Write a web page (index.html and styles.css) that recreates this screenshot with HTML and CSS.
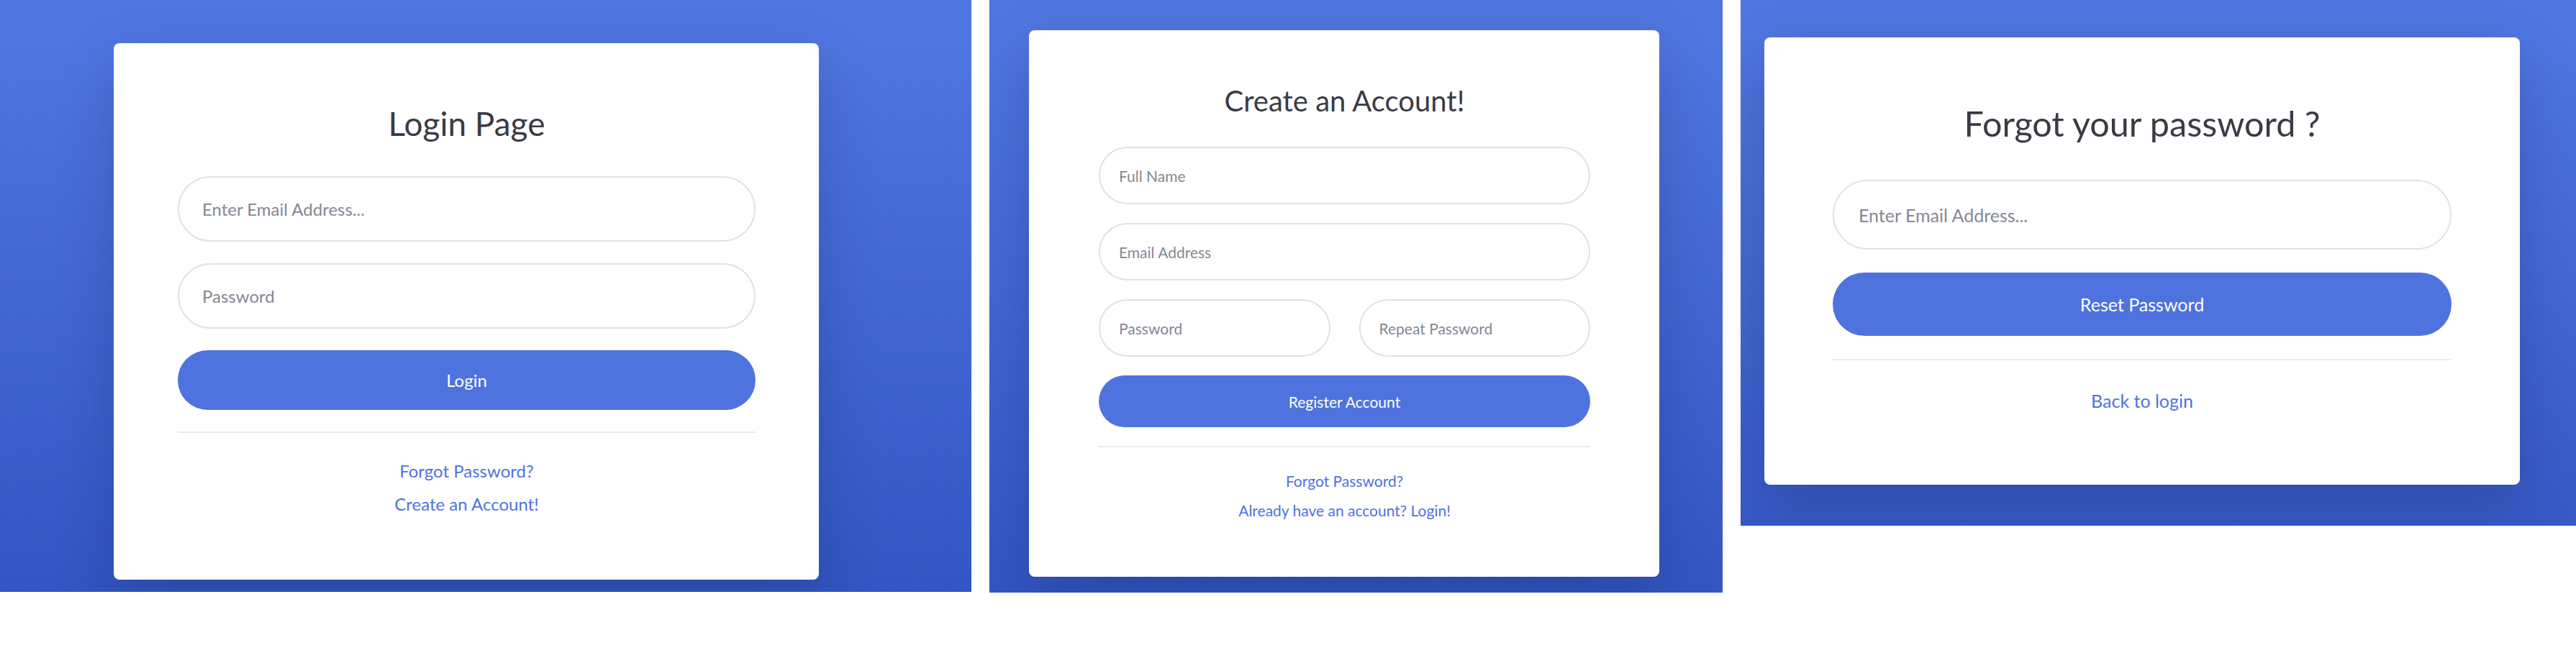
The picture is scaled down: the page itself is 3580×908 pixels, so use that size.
FILE: index.html
```html
<!DOCTYPE html>
<html lang="en">
<head>
<meta charset="utf-8">
<title>Auth pages</title>
<link rel="stylesheet" href="styles.css">
</head>
<body>
<main class="shots">
  <section class="panel panel--login">
    <div class="card">
      <h1 class="card__title">Login Page</h1>
      <form class="form">
        <input class="field" type="email" placeholder="Enter Email Address...">
        <input class="field" type="password" placeholder="Password">
        <button class="btn" type="button">Login</button>
      </form>
      <hr class="divider">
      <div class="links">
        <div class="links__item"><a href="#">Forgot Password?</a></div>
        <div class="links__item"><a href="#">Create an Account!</a></div>
      </div>
    </div>
  </section>

  <section class="panel panel--register">
    <div class="card">
      <h1 class="card__title">Create an Account!</h1>
      <form class="form">
        <input class="field" type="text" placeholder="Full Name">
        <input class="field" type="email" placeholder="Email Address">
        <div class="form__row">
          <input class="field" type="password" placeholder="Password">
          <input class="field" type="password" placeholder="Repeat Password">
        </div>
        <button class="btn" type="button">Register Account</button>
      </form>
      <hr class="divider">
      <div class="links">
        <div class="links__item"><a href="#">Forgot Password?</a></div>
        <div class="links__item"><a href="#">Already have an account? Login!</a></div>
      </div>
    </div>
  </section>

  <section class="panel panel--forgot">
    <div class="card">
      <h1 class="card__title">Forgot your password ?</h1>
      <form class="form">
        <input class="field" type="email" placeholder="Enter Email Address...">
        <button class="btn" type="button">Reset Password</button>
      </form>
      <hr class="divider">
      <div class="links">
        <div class="links__item"><a href="#">Back to login</a></div>
      </div>
    </div>
  </section>
</main>
</body>
</html>
```

FILE: styles.css
```css
* { box-sizing: border-box; }

html, body {
  margin: 0;
  padding: 0;
  background: #ffffff;
}

body {
  font-family: "Lato", "Noto Sans", "Liberation Sans", sans-serif;
  color: #3a3b45;
}

.shots {
  display: flex;
  align-items: flex-start;
  gap: 25px;
}

.panel {
  flex: none;
  overflow: hidden;
  background-color: #4e73df;
  background-image: linear-gradient(180deg, #4f75e0 8%, #3255c3 100%);
}

.panel--login {
  width: 1350px;
  height: 823px;
  padding: 60px 0 0 158px;
  --card-w: 980px;
  --card-h: 746px;
  --pad-top: 84px;
  --pad-l: 89px;
  --pad-r: 88px;
  --title-fs: 46px;
  --title-mb: 46px;
  --field-h: 91px;
  --field-pad: 32px;
  --fs: 24px;
  --gap: 30px;
  --btn-h: 83px;
  --links-mt: 31px;
  --link-lh: 43px;
}

.panel--register {
  width: 1019px;
  height: 824px;
  padding: 42px 0 0 55px;
  --card-w: 876px;
  --card-h: 760px;
  --pad-top: 74px;
  --pad-l: 97px;
  --pad-r: 96px;
  --title-fs: 40px;
  --title-mb: 40px;
  --field-h: 80px;
  --field-pad: 26px;
  --fs: 21px;
  --gap: 26px;
  --btn-h: 72px;
  --links-mt: 27px;
  --link-lh: 39px;
}

.panel--forgot {
  width: 1161px;
  height: 731px;
  padding: 52px 0 0 33px;
  background-image: linear-gradient(180deg, #4f75e0 8%, #3759c6 100%);
  --card-w: 1050px;
  --card-h: 622px;
  --pad-top: 90px;
  --pad-l: 95px;
  --pad-r: 95px;
  --title-fs: 48.5px;
  --title-mb: 50px;
  --field-h: 97px;
  --field-pad: 34px;
  --fs: 25px;
  --gap: 32px;
  --btn-h: 88px;
  --links-mt: 34px;
  --link-lh: 45px;
}

.card {
  width: var(--card-w);
  height: var(--card-h);
  padding: var(--pad-top) var(--pad-r) 0 var(--pad-l);
  background: #ffffff;
  border-radius: 8px;
  box-shadow: 0 28px 80px rgba(0, 0, 0, 0.17);
}

.card__title {
  margin: 0 0 var(--title-mb);
  font-size: var(--title-fs);
  font-weight: 400;
  line-height: 1.2;
  text-align: center;
  color: #3a3b45;
}

.form {
  display: flex;
  flex-direction: column;
  gap: var(--gap);
}

.form__row {
  display: grid;
  grid-template-columns: 1fr 1fr;
  column-gap: 40px;
}

.field {
  display: block;
  width: 100%;
  height: var(--field-h);
  margin: 0;
  padding: 0 var(--field-pad);
  border: 2px solid #dfe0ea;
  border-radius: 999px;
  background: #ffffff;
  font-family: inherit;
  font-size: var(--fs);
  color: #6e707e;
  outline: none;
}

.field::placeholder {
  color: #858796;
  opacity: 1;
}

.btn {
  display: block;
  width: 100%;
  height: var(--btn-h);
  margin: 0;
  padding: 0;
  border: 0;
  border-radius: 999px;
  background: #4e73df;
  color: #ffffff;
  font-family: inherit;
  font-size: var(--fs);
  cursor: pointer;
}

.divider {
  margin: var(--gap) 0 0;
  border: 0;
  border-top: 2px solid #e9eaf1;
  height: 0;
}

.links {
  margin-top: var(--links-mt);
  text-align: center;
}

.links__item {
  line-height: var(--link-lh);
}

.links__item a {
  font-size: var(--fs);
  color: #4e73df;
  text-decoration: none;
}
```
